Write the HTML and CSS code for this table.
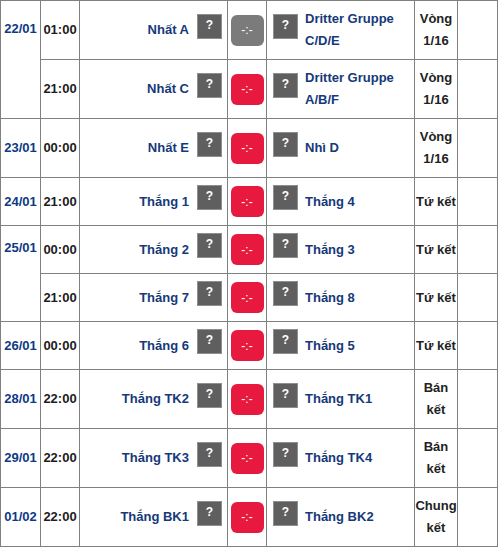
FILE: index.html
```html
<!DOCTYPE html>
<html lang="vi">
<head>
<meta charset="utf-8">
<title>Lịch thi đấu</title>
<link rel="stylesheet" href="styles.css">
</head>
<body>
<div class="schedule">
  <div class="cell date span span-tall">22/01</div>
  <div class="cell time">01:00</div>
  <div class="cell home"><span class="name">Nhất A</span><span class="q">?</span></div>
  <div class="cell score"><span class="btn btn-gray">-:-</span></div>
  <div class="cell away"><span class="q">?</span><span class="name">Dritter Gruppe C/D/E</span></div>
  <div class="cell round">Vòng 1/16</div>
  <div class="cell extra"></div>

  <div class="cell time">21:00</div>
  <div class="cell home"><span class="name">Nhất C</span><span class="q">?</span></div>
  <div class="cell score"><span class="btn">-:-</span></div>
  <div class="cell away"><span class="q">?</span><span class="name">Dritter Gruppe A/B/F</span></div>
  <div class="cell round">Vòng 1/16</div>
  <div class="cell extra"></div>

  <div class="cell date">23/01</div>
  <div class="cell time">00:00</div>
  <div class="cell home"><span class="name">Nhất E</span><span class="q">?</span></div>
  <div class="cell score"><span class="btn">-:-</span></div>
  <div class="cell away"><span class="q">?</span><span class="name">Nhì D</span></div>
  <div class="cell round">Vòng 1/16</div>
  <div class="cell extra"></div>

  <div class="cell date">24/01</div>
  <div class="cell time">21:00</div>
  <div class="cell home"><span class="name">Thắng 1</span><span class="q">?</span></div>
  <div class="cell score"><span class="btn">-:-</span></div>
  <div class="cell away"><span class="q">?</span><span class="name">Thắng 4</span></div>
  <div class="cell round">Tứ kết</div>
  <div class="cell extra"></div>

  <div class="cell date span span-short">25/01</div>
  <div class="cell time">00:00</div>
  <div class="cell home"><span class="name">Thắng 2</span><span class="q">?</span></div>
  <div class="cell score"><span class="btn">-:-</span></div>
  <div class="cell away"><span class="q">?</span><span class="name">Thắng 3</span></div>
  <div class="cell round">Tứ kết</div>
  <div class="cell extra"></div>

  <div class="cell time">21:00</div>
  <div class="cell home"><span class="name">Thắng 7</span><span class="q">?</span></div>
  <div class="cell score"><span class="btn">-:-</span></div>
  <div class="cell away"><span class="q">?</span><span class="name">Thắng 8</span></div>
  <div class="cell round">Tứ kết</div>
  <div class="cell extra"></div>

  <div class="cell date">26/01</div>
  <div class="cell time">00:00</div>
  <div class="cell home"><span class="name">Thắng 6</span><span class="q">?</span></div>
  <div class="cell score"><span class="btn">-:-</span></div>
  <div class="cell away"><span class="q">?</span><span class="name">Thắng 5</span></div>
  <div class="cell round">Tứ kết</div>
  <div class="cell extra"></div>

  <div class="cell date">28/01</div>
  <div class="cell time">22:00</div>
  <div class="cell home"><span class="name">Thắng TK2</span><span class="q">?</span></div>
  <div class="cell score"><span class="btn">-:-</span></div>
  <div class="cell away"><span class="q">?</span><span class="name">Thắng TK1</span></div>
  <div class="cell round">Bán kết</div>
  <div class="cell extra"></div>

  <div class="cell date">29/01</div>
  <div class="cell time">22:00</div>
  <div class="cell home"><span class="name">Thắng TK3</span><span class="q">?</span></div>
  <div class="cell score"><span class="btn">-:-</span></div>
  <div class="cell away"><span class="q">?</span><span class="name">Thắng TK4</span></div>
  <div class="cell round">Bán kết</div>
  <div class="cell extra"></div>

  <div class="cell date">01/02</div>
  <div class="cell time">22:00</div>
  <div class="cell home"><span class="name">Thắng BK1</span><span class="q">?</span></div>
  <div class="cell score"><span class="btn">-:-</span></div>
  <div class="cell away"><span class="q">?</span><span class="name">Thắng BK2</span></div>
  <div class="cell round">Chung kết</div>
  <div class="cell extra"></div>
</div>
</body>
</html>
```

FILE: styles.css
```css
html, body {
  margin: 0;
  padding: 0;
  background: #fff;
}

.schedule {
  display: grid;
  grid-template-columns: 39px 38px 147px 38px 147px 42px 39px;
  gap: 1px;
  padding: 1px;
  width: max-content;
  background: #808080;
  font-family: "Liberation Sans", Arial, sans-serif;
  font-size: 13px;
  font-weight: bold;
  line-height: 22px;
}

.cell {
  background: #fff;
  padding: 7px 0;
  display: flex;
  align-items: center;
  min-height: 33px;
}

.date {
  justify-content: center;
  color: #0d3a86;
}

.date.span {
  grid-row: span 2;
  align-items: flex-start;
}

.date.span-tall {
  padding-top: 17px;
}

.date.span-short {
  padding-top: 11px;
}

.time {
  justify-content: center;
  color: #1c1c1c;
}

.home {
  justify-content: flex-end;
  padding-right: 5px;
  gap: 8px;
  color: #15397a;
  text-align: right;
}

.away {
  justify-content: flex-start;
  padding-left: 6px;
  padding-right: 4px;
  gap: 7px;
  color: #15397a;
}

.name {
  min-width: 0;
}

.q {
  flex: none;
  width: 23px;
  height: 23px;
  margin-bottom: 8px;
  background: #5f5f5f;
  border: 1px solid #8f8f8f;
  color: #fff;
  font-size: 12px;
  line-height: 20px;
  text-align: center;
}

.score {
  justify-content: center;
}

.btn {
  display: flex;
  align-items: center;
  justify-content: center;
  width: 33px;
  height: 31px;
  margin: 1px 0;
  border-radius: 6px;
  background: #e8193f;
  color: #fff;
  font-size: 12px;
  font-weight: normal;
  line-height: 1;
}

.btn-gray {
  background: #7b7b7b;
}

.round {
  justify-content: center;
  text-align: center;
  color: #222;
}

.extra {
  background: #fff;
}
```
